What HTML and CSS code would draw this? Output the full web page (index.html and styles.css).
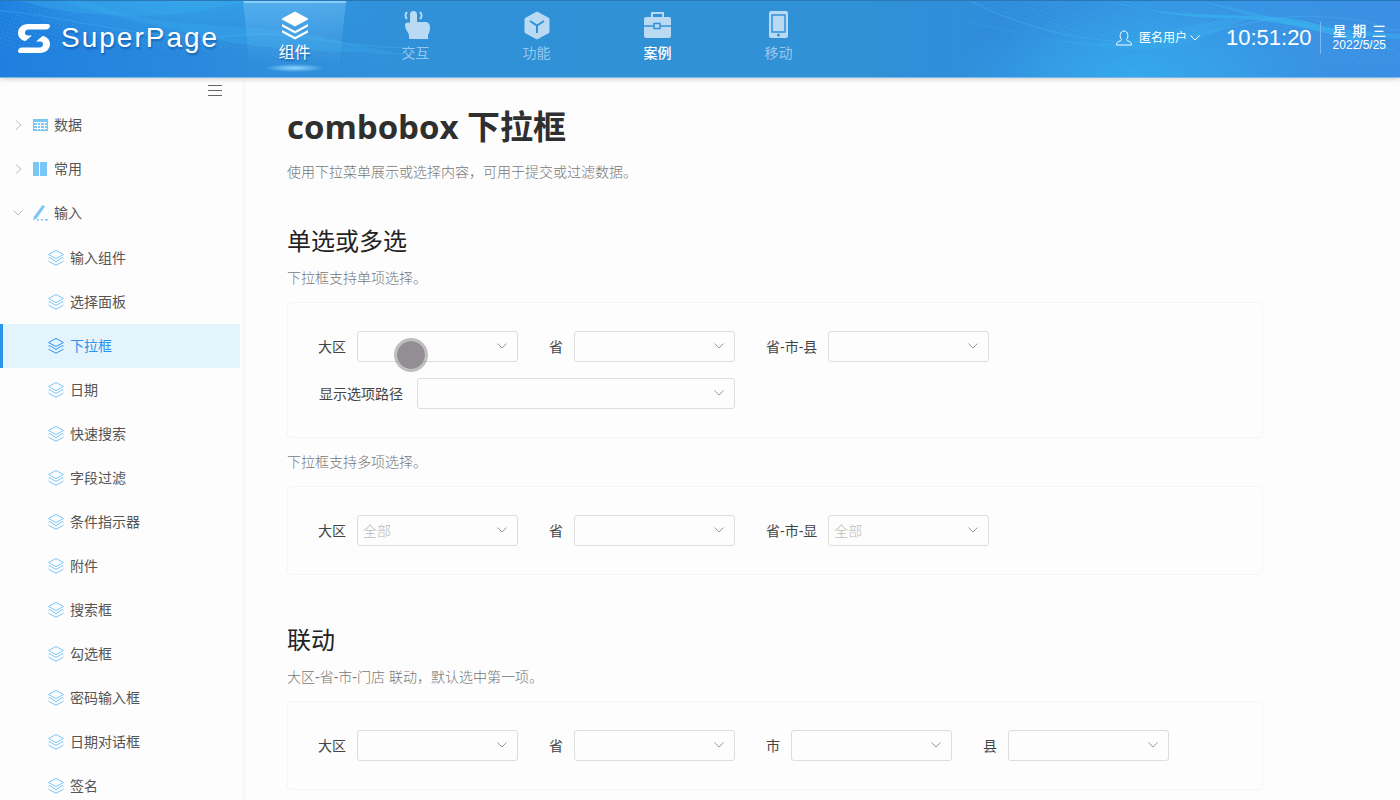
FILE: index.html
```
<!DOCTYPE html>
<html lang="zh-CN">
<head>
<meta charset="utf-8">
<title>SuperPage - combobox 下拉框</title>
<link rel="stylesheet" href="styles.css">
</head>
<body>
<svg class="sprite" aria-hidden="true">
  <symbol id="layers" viewBox="0 0 16 16"><path d="M8 .5 15.500 4.500 8 8.500.5 4.500ZM.5 8l2 0L8 11.500 13.500 8h2M.5 11.200l7.500 4 7.500-4" fill="none" stroke="currentColor" stroke-linejoin="round"/></symbol>
  <symbol id="right" viewBox="0 0 16 16"><path d="m6 3.500 5 4.500-5 4.500" fill="none" stroke="currentColor"/></symbol>
  <symbol id="down" viewBox="0 0 16 16"><path d="m3.500 5.500 4.500 4.500 4.500-4.500" fill="none" stroke="currentColor"/></symbol>
</svg>

<header class="topbar">
  <svg class="waves" viewBox="0 0 1400 78" preserveAspectRatio="none" aria-hidden="true">
    <defs>
      <pattern id="dots" width="4" height="4" patternUnits="userSpaceOnUse" patternTransform="rotate(18)"><rect width="1" height="1" fill="#5cc4f0"/></pattern>
    </defs>
    <g fill="#38b0ee">
      <path opacity=".35" d="M20 0c40 12 90 18 150 14 40-4 55-10 80-14Z"/>
      <path opacity=".3" d="M90 0c70 36 180 16 260 44l60 12c-80-6-150-4-210-20C150 24 110 14 60 0Z"/>
      <path opacity=".35" d="M960 18c60 20 130 30 170 22 60-14 80-22 120-22-40 14-60 34-120 32-50-2-110-16-170-32Z"/>
      <path opacity=".7" d="M1110 0c50 18 130 12 180 18 40 6 70 22 110 34-50-10-90-28-160-34-60 0-90-8-130-18Z"/>
      <path opacity=".5" d="M1200 0c60 12 100 28 200 34v5c-90-6-150-24-200-39Z"/>
    </g>
    <g fill="url(#dots)">
      <path opacity=".35" d="M0 8c60-14 80 10 150 20s110 20 190 18l60 14c-140 4-240-20-400-10Z"/>
      <path opacity=".35" d="M960 0h250c80 20 120 20 190 30v40c-80-4-130-34-190-36-80 0-150 20-250-34Z"/>
    </g>
    <g fill="none" stroke="#4fb9f0" opacity=".35">
      <path d="M0 10c70 6 160 34 230 26s100 12 180 12"/>
      <path d="M970 0c40 20 90 40 160 42s120-30 190-26 50 12 80 14"/>
    </g>
  </svg>
  <a class="brand" href="#">
    <svg width="34" height="32" viewBox="0 0 34 32" aria-hidden="true">
      <g fill="#fff">
        <path id="hook" d="M31 2H11C5 2 1 6 1 11c0 4 3 7.500 7.500 8L15 13.500h-3.500c-3 0-3.500-1.300-3.500-2.700C8 9 9 7.500 11.500 7.500H29c2.500 0 4-2 4-3.500 0-1-.8-2-2-2Z"/>
        <use href="#hook" transform="rotate(180 17 16.500)"/>
      </g>
    </svg>
    <span>SuperPage</span>
  </a>
  <nav class="mainnav">
    <a class="navitem current" href="#">
      <svg width="30" height="30" viewBox="0 0 30 30" fill="#fff" aria-hidden="true"><path d="M15 1.500 28 8.500v1L15 16.500 2 9.500v-1Z"/><path d="m2 14 13 7 13-7v2.500l-13 7-13-7ZM2 20l13 7 13-7v2.500l-13 7-13-7Z"/></svg>
      <span>组件</span>
    </a>
    <a class="navitem" href="#">
      <svg width="30" height="30" viewBox="0 0 30 30" fill="currentColor" aria-hidden="true"><path d="M9 4.500a3.500 3.500 0 0 1 7 0V12h8c3 0 5 2 5 5 0 4-1 6-2 8v4H8v-4c-1-3-4-6-4-10 0-2 2-3 5-2Z"/><path d="M6 2c-2 2-2 5 0 7M19 2c2 2 2 5 0 7" fill="none" stroke="currentColor" stroke-width="2"/></svg>
      <span>交互</span>
    </a>
    <a class="navitem" href="#">
      <svg width="30" height="30" viewBox="0 0 30 30" aria-hidden="true"><path d="M15 2 27 8.500v14L15 29 3 22.500v-14Z" fill="currentColor" stroke="currentColor" stroke-linejoin="round"/><path d="m8 11 7 4.500 7-4.500M15 15v8" fill="none" stroke="#3091d8" stroke-width="2"/></svg>
      <span>功能</span>
    </a>
    <a class="navitem strong" href="#">
      <svg width="30" height="30" viewBox="0 0 30 30" fill="currentColor" aria-hidden="true"><path d="M9 7V3h11v4" fill="none" stroke="currentColor" stroke-width="2"/><rect x="1" y="7" width="27" height="21" rx="2"/><path d="M1 16h10m6 0h11M11 13.500h6v5h-6Z" fill="none" stroke="#3091d8" stroke-width="1.500"/></svg>
      <span>案例</span>
    </a>
    <a class="navitem" href="#">
      <svg width="30" height="30" viewBox="0 0 30 30" aria-hidden="true"><rect x="5" y="1" width="19" height="27" rx="2" fill="currentColor"/><rect x="8" y="5" width="13" height="17" fill="none" stroke="#3091d8" stroke-width="1.500"/><circle cx="14.500" cy="25" r="1.500" fill="#3091d8"/></svg>
      <span>移动</span>
    </a>
  </nav>
  <div class="account">
    <button class="user" type="button">
      <svg width="16" height="16" viewBox="0 0 16 16" fill="none" stroke="#fff" aria-hidden="true"><path d="M5.500 9.500C3 7 4 1 8 1s5 6 2.500 8.500c0 2 5 1 5 5.500H.5c0-4.500 5-3.500 5-5.500Z"/></svg>
      <span>匿名用户</span>
      <svg class="caret" width="16" height="16" aria-hidden="true"><use href="#down"/></svg>
    </button>
    <time class="clock">10:51:20</time>
    <div class="date"><strong>星 期 三</strong><span>2022/5/25</span></div>
  </div>
</header>

<div class="page">
  <aside class="sidebar">
    <button class="collapse" type="button" aria-label="收起菜单"><svg width="16" height="12" viewBox="0 0 16 12" stroke="#666" aria-hidden="true"><path d="M1 .5h14M1 5.500h14M1 10.500h14"/></svg></button>
    <ul class="tree">
      <li><a class="row" href="#"><svg class="arrow"><use href="#right"/></svg><svg class="icon" viewBox="0 0 16 16"><path fill="#7ac6f7" d="M1 2h15v12H1Z"/><path stroke="#fdfdfd" d="M2 5.500h13M2 8.500h13M2 11.500h13M5.500 5v8M8.500 5v8M12.500 5v8"/></svg>数据</a></li>
      <li><a class="row" href="#"><svg class="arrow"><use href="#right"/></svg><svg class="icon" viewBox="0 0 16 16"><path fill="#7ac6f7" d="M1 1h6v14H1ZM8 1h7v14H8Z"/></svg>常用</a></li>
      <li><a class="row" href="#"><svg class="arrow"><use href="#down"/></svg><svg class="icon" viewBox="0 0 16 16"><path fill="#7ac6f7" d="m10.500 0 2.500 1.500L5 13l-4 2.500 1-4ZM5 14h2v1.500H5ZM9 14h2v1.500H9ZM13 14h3v1.500h-3Z"/></svg>输入</a>
        <ul class="subtree">
          <li><a class="row" href="#"><svg class="icon"><use href="#layers"/></svg>输入组件</a></li>
          <li><a class="row" href="#"><svg class="icon"><use href="#layers"/></svg>选择面板</a></li>
          <li><a class="row selected" href="#"><svg class="icon"><use href="#layers"/></svg>下拉框</a></li>
          <li><a class="row" href="#"><svg class="icon"><use href="#layers"/></svg>日期</a></li>
          <li><a class="row" href="#"><svg class="icon"><use href="#layers"/></svg>快速搜索</a></li>
          <li><a class="row" href="#"><svg class="icon"><use href="#layers"/></svg>字段过滤</a></li>
          <li><a class="row" href="#"><svg class="icon"><use href="#layers"/></svg>条件指示器</a></li>
          <li><a class="row" href="#"><svg class="icon"><use href="#layers"/></svg>附件</a></li>
          <li><a class="row" href="#"><svg class="icon"><use href="#layers"/></svg>搜索框</a></li>
          <li><a class="row" href="#"><svg class="icon"><use href="#layers"/></svg>勾选框</a></li>
          <li><a class="row" href="#"><svg class="icon"><use href="#layers"/></svg>密码输入框</a></li>
          <li><a class="row" href="#"><svg class="icon"><use href="#layers"/></svg>日期对话框</a></li>
          <li><a class="row" href="#"><svg class="icon"><use href="#layers"/></svg>签名</a></li>
        </ul>
      </li>
    </ul>
  </aside>

  <main class="content">
    <h1>combobox 下拉框</h1>
    <p class="lead">使用下拉菜单展示或选择内容，可用于提交或过滤数据。</p>

    <section>
      <h2>单选或多选</h2>
      <p>下拉框支持单项选择。</p>
      <div class="demo">
        <div class="fields">
          <div class="field"><label for="a1">大区</label><span class="combo touched"><select id="a1"><option></option></select><svg><use href="#down"/></svg></span></div>
          <div class="field"><label for="a2">省</label><span class="combo"><select id="a2"><option></option></select><svg><use href="#down"/></svg></span></div>
          <div class="field"><label for="a3">省-市-县</label><span class="combo"><select id="a3"><option></option></select><svg><use href="#down"/></svg></span></div>
        </div>
        <div class="fields">
          <div class="field"><label class="path" for="a4">显示选项路径</label><span class="combo wide"><select id="a4"><option></option></select><svg><use href="#down"/></svg></span></div>
        </div>
      </div>
      <p>下拉框支持多项选择。</p>
      <div class="demo">
        <div class="fields">
          <div class="field"><label for="b1">大区</label><span class="combo"><select id="b1"><option>全部</option></select><svg><use href="#down"/></svg></span></div>
          <div class="field"><label for="b2">省</label><span class="combo"><select id="b2"><option></option></select><svg><use href="#down"/></svg></span></div>
          <div class="field"><label for="b3">省-市-显</label><span class="combo"><select id="b3"><option>全部</option></select><svg><use href="#down"/></svg></span></div>
        </div>
      </div>
    </section>

    <section>
      <h2>联动</h2>
      <p>大区-省-市-门店 联动，默认选中第一项。</p>
      <div class="demo">
        <div class="fields">
          <div class="field"><label for="c1">大区</label><span class="combo"><select id="c1"><option></option></select><svg><use href="#down"/></svg></span></div>
          <div class="field"><label for="c2">省</label><span class="combo"><select id="c2"><option></option></select><svg><use href="#down"/></svg></span></div>
          <div class="field"><label for="c3">市</label><span class="combo"><select id="c3"><option></option></select><svg><use href="#down"/></svg></span></div>
          <div class="field"><label for="c4">县</label><span class="combo"><select id="c4"><option></option></select><svg><use href="#down"/></svg></span></div>
        </div>
      </div>
    </section>
  </main>
</div>
</body>
</html>
```
FILE: styles.css
```
* { box-sizing: border-box; }

body {
  margin: 0;
  height: 100vh;
  display: flex;
  flex-direction: column;
  overflow: hidden;
  background: #fdfdfd;
  color: #444;
  font: 300 14px/20px "Liberation Sans", "Noto Sans CJK SC", sans-serif;
}

a { color: inherit; text-decoration: none; }
ul { list-style: none; margin: 0; padding: 0; }
button { border: 0; padding: 0; background: none; font: inherit; color: inherit; }
.sprite { display: none; }

/* Top bar */
.topbar {
  position: relative;
  z-index: 1;
  flex: none;
  display: flex;
  height: 78px;
  color: #fff;
  border-top: 1px solid #2878b8;
  border-bottom: 1px solid #7ab8e8;
  background:
    radial-gradient(ellipse 180px 70px at 81% 100%, #35a8ea, transparent),
    radial-gradient(ellipse 200px 50px at 14% 0, #34a0e8, transparent),
    linear-gradient(90deg, #1e7fe0 0, #308edc 20%, #3091d8 30%, #3091d6 62%, #308cdc 72%, #3598e4 82%, #3c8fe4 100%);
  box-shadow: 0 1px 5px rgba(0, 0, 0, .2);
}
.waves { position: absolute; inset: 0; width: 100%; height: 100%; }

.brand {
  position: relative;
  display: flex;
  align-items: center;
  gap: 10px;
  width: 234px;
  padding-left: 17px;
  padding-bottom: 3px;
  font-size: 28px;
  line-height: 32px;
  font-weight: 400;
  letter-spacing: 2px;
  text-shadow: 1px 2px 2px rgba(0, 40, 110, .4);
}

.mainnav { display: flex; flex: 1; position: relative; }
.navitem {
  display: flex;
  flex-direction: column;
  align-items: center;
  width: 121px;
  padding-top: 9px;
  line-height: 26px;
  color: #badaf3;
}
.navitem span { font-weight: 400; opacity: .75; }
.navitem.strong span { color: #fff; opacity: 1; font-weight: 500; }
.navitem.current {
  color: #fff;
  background:
    radial-gradient(ellipse 30px 4px at 50% 67px, #8cd8ff, transparent),
    linear-gradient(#8cccf8, #8cccf8) 50% 0 / 102px 2px no-repeat;
  position: relative;
}
.navitem.current::before {
  content: "";
  position: absolute;
  inset: 0 9px;
  background: linear-gradient(rgba(130, 205, 250, .4), transparent 85%);
  clip-path: polygon(0 0, 100% 0, 92% 100%, 8% 100%);
}
.navitem.current svg { position: relative; }
.navitem.current span { position: relative; font-size: 16px; opacity: 1; text-shadow: 1px 2px 2px rgba(0, 40, 110, .4); }

.account { position: relative; display: flex; align-items: center; padding: 0 14px 2px 0; }
.user { display: flex; align-items: center; font-size: 12px; font-weight: 400; }
.user span { margin-left: 7px; }
.clock { margin-left: 23px; font-size: 22px; font-weight: 400; }
.date {
  display: flex;
  flex-direction: column;
  justify-content: center;
  height: 32px;
  margin-left: 8px;
  padding-left: 12px;
  border-left: 1px solid #7ab8ee;
  font-size: 12px;
  line-height: 14px;
  font-weight: 400;
}
.date strong { font-size: 14px; font-weight: 500; text-align-last: justify; }

/* Sidebar */
.page { display: flex; flex: 1; min-height: 0; }
.sidebar {
  width: 244px;
  flex: none;
  padding-right: 3px;
  border-right: 1px solid #f8f8f8;
  box-shadow: 1px 0 2px #f7f7f7;
  overflow: hidden;
}
.collapse { display: flex; margin: 7px 0 6px auto; padding-right: 17px; }
.tree { color: #555; font-weight: 400; }
.row { display: flex; align-items: center; height: 44px; padding-left: 10px; }
.arrow { width: 16px; height: 16px; margin-right: 6px; color: #bbb; }
.icon { width: 16px; height: 16px; margin-right: 6px; color: #7ac6f7; }
.subtree { margin-top: 1px; }
.subtree .row { padding-left: 45px; border-left: 3px solid transparent; }
.subtree .selected { color: #2b93ec; background: #e3f4fd; border-left-color: #2b93ec; }
.selected .icon { color: #2b93ec; }

/* Content */
.content { flex: 1; min-width: 0; padding: 24px 137px 0 43px; }
h1 {
  margin: 0 0 10px;
  color: #2f2f2f;
  font: 700 33px/50px "Open Sans", "Noto Sans CJK SC", sans-serif;
}
h2 { margin: 0 0 10px; color: #222; font-size: 24px; line-height: 32px; font-weight: 400; }
p { margin: 0 0 14px; color: #777; }
.lead { margin-bottom: 44px; }
.demo {
  margin-bottom: 14px;
  padding: 28px 30px;
  border: 1px solid #f5f5f5;
  border-radius: 4px;
}
.fields { display: flex; gap: 31px; }
.fields + .fields { margin-top: 16px; }
section { margin-bottom: 50px; }
.field { display: flex; align-items: center; }
.field label { margin-right: 11px; font-weight: 400; }
.field .path { margin: 0 14px 0 1px; }
.combo { position: relative; display: block; width: 161px; height: 31px; }
.combo.wide { width: 318px; }
.combo select {
  appearance: none;
  width: 100%;
  height: 100%;
  padding: 0 5px;
  border: 1px solid #ddd;
  border-radius: 3px;
  background: #fdfdfd;
  color: #bbb;
  font: inherit;
}
.combo svg { position: absolute; right: 8px; top: 7px; width: 16px; height: 16px; color: #999; pointer-events: none; }
.touched::after {
  content: "";
  position: absolute;
  box-sizing: border-box;
  left: 37px;
  top: 7px;
  width: 34px;
  height: 34px;
  border: 3px solid rgba(150, 150, 150, .6);
  border-radius: 50%;
  background: #938e94;
  background-clip: padding-box;
}
```
